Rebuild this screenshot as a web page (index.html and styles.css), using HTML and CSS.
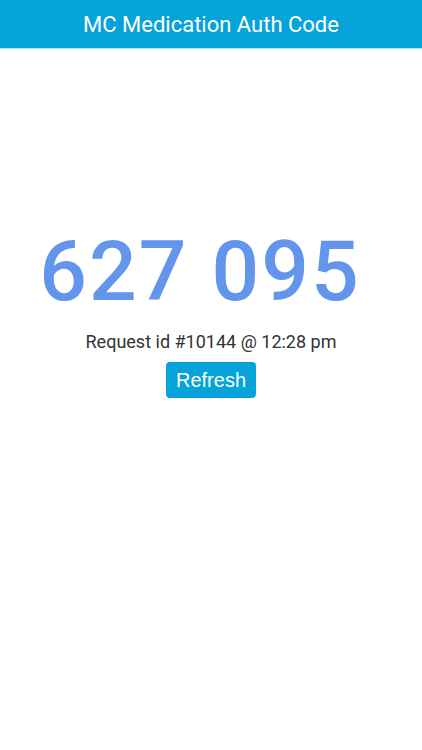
FILE: index.html
```html
<!DOCTYPE html>
<html lang="en">

<head>
    <meta charset="UTF-8" />
    <meta name="viewport" content="width=device-width, initial-scale=1.0"/>
    <title>MC Medication Auth Code</title>

    <link rel="stylesheet" href="styles.css">
</head>

<body>

    <div class="header">
        <h1>MC Medication Auth Code</h1>
    </div>

    <div class="container">
        <div class="code" id="authCode">627 095</div>
        <p class="request">Request id #10144 @ 12:28 pm</p>
        <button class="refresh-btn">Refresh</button>
    </div>

</body>

</html>
```

FILE: styles.css
```css
:root {
    --primary: #06a3d9;
    --code: #6495ed;
    --text: #333;
}

* {
    box-sizing: border-box;
}

body {
    font-family: Roboto, Arial, sans-serif;
    margin: 0;
    background: #fff;
    color: var(--text);
}

.header {
    background: var(--primary);
    color: white;
    height: 49px;
    display: flex;
    justify-content: center;
    align-items: center;
    border-bottom: 1px solid #b3e2f2;
}

.header h1 {
    margin: 0;
    font-size: 22px;
    font-weight: 400;
}

.container {
    display: flex;
    flex-direction: column;
    align-items: center;
    padding-top: 175px;
}

.code {
    font-size: 84px;
    font-weight: 500;
    line-height: 96px;
    color: var(--code);
    letter-spacing: 2px;
    padding-right: 22px;
}

.request {
    margin: 10px 0 8px 0;
    font-size: 18px;
    line-height: 24px;
}

.refresh-btn {
    background: var(--primary);
    color: white;
    border: none;
    border-radius: 4px;
    font-family: "Liberation Sans", Arial, sans-serif;
    font-size: 20px;
    height: 36px;
    padding: 0 10px;
    cursor: pointer;
}
```
